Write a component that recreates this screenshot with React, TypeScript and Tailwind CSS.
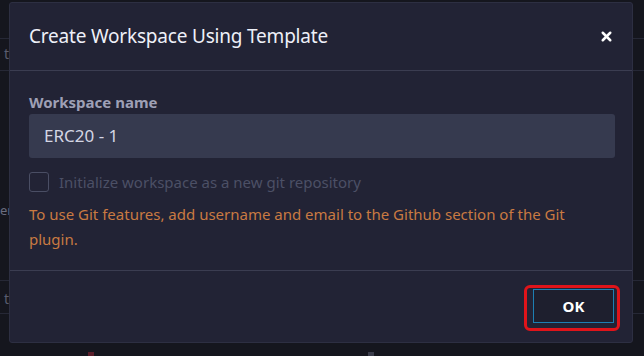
import { X } from 'lucide-react';

const font = { fontFamily: '"Noto Sans", "Open Sans", sans-serif' };

const Backdrop = () => {
  // bits of the app behind the dialog, barely visible at the edges
  return (
    <div className="absolute inset-0 flex flex-col">
      <div className="h-[39px] border-b border-[#262836]" />
      <div className="h-[32px] border-b border-[#262836] text-[#5a5d70] text-[14px] pl-[4px] pt-[4px]">t</div>
      <div className="h-[130px]" />
      <div className="text-[#6a6d80] text-[13px] h-[79px]">er</div>
      <div className="h-[0px] border-b border-[#262836]" />
      <div className="h-[33px] border-b border-[#262836] text-[#5a5d70] text-[14px] pl-[4px] pt-[7px]">t</div>
      <div className="flex-1 relative">
        <div className="absolute left-[88px] bottom-0 w-[6px] h-[4px] bg-[#5a1e2a]" />
        <div className="absolute left-[368px] bottom-0 w-[6px] h-[4px] bg-[#3a3c4a]" />
      </div>
    </div>
  );
};

export default function App() {
  return (
    <div className="relative w-[644px] h-[356px] bg-[#15161e] overflow-hidden" style={font}>
      <Backdrop />
      <div className="absolute left-[9px] top-[2px] w-[624px] h-[341px] bg-[#222335] border border-[#2d2f42] rounded-[3px] flex flex-col">
        <div className="h-[68px] shrink-0 flex items-center justify-between pl-[19px] pr-[18px] border-b border-[#3b3d51]">
          <div className="text-[19px] text-[#eef0f8] tracking-[-0.2px]">Create Workspace Using Template</div>
          <X className="w-[15px] h-[15px] text-white" strokeWidth={4} />
        </div>
        <div className="flex-1 px-[19px] pt-[20px]">
          <div className="text-[15px] font-bold text-[#9ea0b6] leading-[22px]">Workspace name</div>
          <div className="mt-[1px] h-[44px] w-[586px] rounded-[3px] bg-[#363a4f] flex items-center pl-[15px] text-[17px] text-[#d4d6e4]">
            ERC20 - 1
          </div>
          <div className="mt-[13px] flex items-center gap-[10px]">
            <div className="w-[20px] h-[20px] rounded-[3px] border border-[#4a4e64]" />
            <div className="text-[15px] text-[#4c5066]">Initialize workspace as a new git repository</div>
          </div>
          <div className="mt-[8px] text-[15px] leading-[25px] text-[#c97a42]">
            To use Git features, add username and email to the Github section of the Git
            <br />
            plugin.
          </div>
        </div>
        <div className="h-[72px] shrink-0 border-t border-[#3b3d51] flex items-center justify-end pr-[12px]">
          <div className="mt-[3px] border-[3px] border-[#e0141a] rounded-[6px] pl-[6px] pr-[3px] pt-[1px] pb-[5px]">
            <button className="block w-[81px] h-[34px] border border-[#1d7fb3] bg-[#1e1f2e] text-white font-bold text-[15px]">
              OK
            </button>
          </div>
        </div>
      </div>
    </div>
  );
}
